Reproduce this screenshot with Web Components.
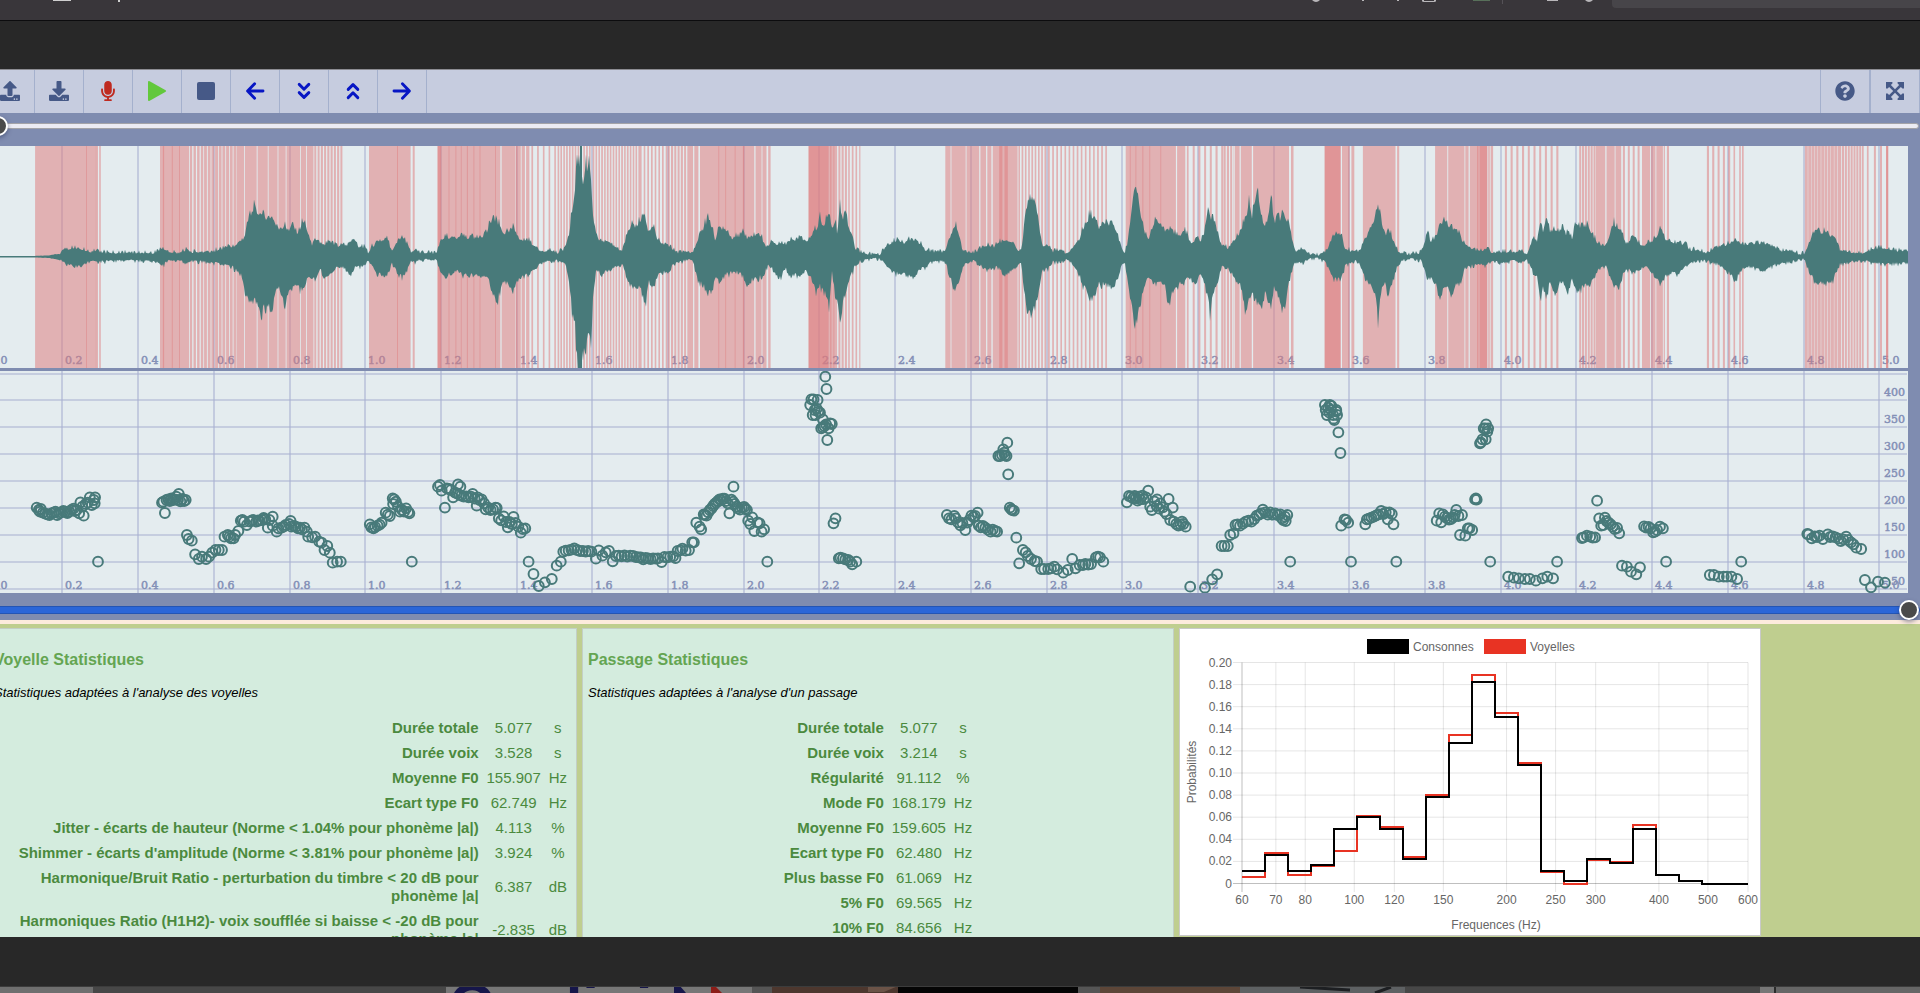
<!DOCTYPE html>
<html lang="fr">
<head>
<meta charset="utf-8">
<title>Analyse de la voix</title>
<style>
    html, body { height: 100%; }
    body { margin: 0; background: #282828; font-family: "Liberation Sans", Arial, sans-serif; overflow: hidden; }
</style>
</head>
<body>
<voix-page></voix-page>

<script>
// Trazos de los iconos de la barra
const ICONOS = {
    subir: ['0 0 512 512', '<path d="M296 384h-80c-13.3 0-24-10.7-24-24V192h-87.7c-17.8 0-26.7-21.5-14.1-34.1L242.3 5.7c7.5-7.5 19.8-7.5 27.3 0l152.2 152.2c12.6 12.6 3.7 34.1-14.1 34.1H320v168c0 13.3-10.7 24-24 24zm216-8v112c0 13.3-10.7 24-24 24H24c-13.3 0-24-10.7-24-24V376c0-13.3 10.7-24 24-24h136v8c0 30.9 25.1 56 56 56h80c30.9 0 56-25.1 56-56v-8h136c13.3 0 24 10.7 24 24zm-124 88c0-11-9-20-20-20s-20 9-20 20 9 20 20 20 20-9 20-20zm64 0c0-11-9-20-20-20s-20 9-20 20 9 20 20 20 20-9 20-20z"/>'],
    bajar: ['0 0 512 512', '<path d="M216 0h80c13.3 0 24 10.7 24 24v168h87.7c17.8 0 26.7 21.5 14.1 34.1L269.7 378.3c-7.5 7.5-19.8 7.5-27.3 0L90.1 226.1c-12.6-12.6-3.7-34.1 14.1-34.1H192V24c0-13.3 10.7-24 24-24zm296 376v112c0 13.3-10.7 24-24 24H24c-13.3 0-24-10.7-24-24V376c0-13.3 10.7-24 24-24h146.7l49 49c20.1 20.1 52.5 20.1 72.6 0l49-49H488c13.3 0 24 10.7 24 24zm-124 88c0-11-9-20-20-20s-20 9-20 20 9 20 20 20 20-9 20-20zm64 0c0-11-9-20-20-20s-20 9-20 20 9 20 20 20 20-9 20-20z"/>'],
    micro: ['-80 0 512 512', '<path d="M176 352c53.02 0 96-42.98 96-96V96c0-53.02-42.98-96-96-96S80 42.98 80 96v160c0 53.02 42.98 96 96 96zm160-160h-16c-8.84 0-16 7.16-16 16v48c0 74.8-64.49 134.82-140.79 127.38C96.71 376.89 48 317.11 48 250.3V208c0-8.84-7.16-16-16-16H16c-8.84 0-16 7.16-16 16v40.16c0 89.64 63.97 169.55 152 181.69V464H96c-8.84 0-16 7.16-16 16v16c0 8.84 7.16 16 16 16h160c8.84 0 16-7.16 16-16v-16c0-8.84-7.16-16-16-16h-56v-33.77C285.71 418.47 352 344.9 352 256v-48c0-8.84-7.16-16-16-16z"/>'],
    play: ['0 0 20 20', '<path d="M1 1.2Q1 -.6 2.7 .3L18.2 8.9Q20 10 18.2 11.1L2.7 19.7Q1 20.6 1 18.8Z"/>'],
    stop: ['0 0 20 20', '<rect x="1" y="1" width="18" height="18" rx="2"/>'],
    izq: ['0 0 20 20', '<path class="l" d="M9.6 2.8 2.6 10l7 7.2M3 10h15"/>'],
    abajo: ['0 0 20 20', '<path class="l" d="M5.2 3.4l4.8 4.8 4.8-4.8M5.2 11.6l4.8 4.8 4.8-4.8"/>'],
    arriba: ['0 0 20 20', '<path class="l" d="M5.2 8.4L10 3.6l4.8 4.8M5.2 16.6l4.8-4.8 4.8 4.8"/>'],
    der: ['0 0 20 20', '<path class="l" d="M10.4 2.8l7 7.2-7 7.2M17 10H2"/>'],
    ayuda: ['0 0 512 512', '<path d="M504 256c0 136.997-111.043 248-248 248S8 392.997 8 256C8 119.083 119.043 8 256 8s248 111.083 248 248zM262.655 90c-54.497 0-89.255 22.957-116.549 63.758-3.536 5.286-2.353 12.415 2.715 16.258l34.699 26.31c5.205 3.947 12.621 3.008 16.665-2.122 17.864-22.658 30.113-35.797 57.303-35.797 20.429 0 45.698 13.148 45.698 32.958 0 14.976-12.363 22.667-32.534 33.976C247.128 238.528 216 254.941 216 296v4c0 6.627 5.373 12 12 12h56c6.627 0 12-5.373 12-12v-1.333c0-28.462 83.186-29.647 83.186-106.667 0-58.002-60.165-102-116.531-102zM256 338c-25.365 0-46 20.635-46 46 0 25.364 20.635 46 46 46s46-20.636 46-46c0-25.365-20.635-46-46-46z"/>'],
    ampliar: ['0 0 20 20', '<path d="M1 1h6.4v1.6L5.9 4.1 10 8.2l4.1-4.1-1.5-1.5V1H19v6.4h-1.6l-1.5-1.5L11.8 10l4.1 4.1 1.5-1.5H19V19h-6.4v-1.6l1.5-1.5L10 11.8l-4.1 4.1 1.5 1.5V19H1v-6.4h1.6l1.5 1.5L8.2 10 4.1 5.9 2.6 7.4H1z"/>'],
};

// Envolvente de la onda: [x, amplitud arriba, amplitud abajo], en tres tramos de 640 px.
// Unidades de muestra: UX por px horizontal y UY por px vertical.
const UX = 2.45;
const UY = 3;

const ONDA = [
    [0, '0,2,2 80,2,2 120,4,4 150,10,10 160,22,20 180,28,28 205,22,25 215,14,14 235,18,15 260,12,12 300,12,12 340,12,12 380,12,12 398,28,25 410,12,12 440,12,12 455,22,20 470,14,14 500,15,14 520,15,18 540,22,22 570,30,30 590,45,50 600,65,110 610,120,135 622,142,125 630,125,130 637,130,165 650,120,150 668,120,145 680,85,90 690,85,110 698,90,140 710,80,100 718,100,90 728,65,85 740,105,100 750,95,80 755,60,60 765,35,65 776,55,60 785,35,35 792,35,60 810,45,50 830,30,30 845,35,30 855,38,55 865,55,35 880,30,30 895,30,25 902,10,10 912,30,30 925,45,50 946,55,60 960,20,20 970,40,40 985,60,62 998,40,35 1008,12,10 1018,25,18 1030,12,8 1070,12,10 1080,45,50 1095,60,58 1115,50,40 1130,65,50 1150,55,55 1180,58,55 1195,80,60 1205,115,110 1218,105,130 1230,75,75 1245,70,75 1257,85,110 1265,75,70 1275,45,65 1290,55,55 1310,30,35 1330,15,15 1350,18,15 1365,10,10 1385,25,20 1395,75,80 1402,145,160 1408,180,180 1412,290,280 1420,285,310 1428,225,290 1435,275,260 1443,255,235 1449,225,255 1453,110,110 1460,60,40 1475,45,50 1492,40,40 1515,25,25 1525,20,25 1535,60,60 1545,85,85 1560,95,90'],
    [640, '0,110,95 8,130,115 14,115,140 20,65,70 33,95,95 42,50,55 55,38,45 68,35,50 80,20,25 95,12,15 110,18,10 130,10,10 137,30,45 145,65,75 155,85,85 165,112,110 178,85,100 184,50,60 195,85,75 208,80,55 225,55,45 240,60,45 253,75,60 262,55,90 275,65,65 290,70,62 305,40,50 313,25,25 322,45,30 335,38,60 345,40,65 355,38,30 370,48,65 380,45,50 392,65,60 405,40,40 418,55,55 425,80,75 433,80,105 440,115,85 450,90,100 460,128,120 463,125,155 470,85,45 480,105,130 484,60,140 489,165,190 491,155,220 496,110,150 503,140,100 510,90,80 520,60,45 526,25,30 538,15,12 560,8,8 580,3,4 590,10,8 605,35,25 618,42,45 632,55,50 645,40,52 667,55,60 685,42,40 700,20,30 715,15,15 745,15,12 752,35,30 762,65,65 773,95,100 783,60,65 790,20,30 805,15,15 820,12,12 835,25,25 852,38,40 865,28,28 880,45,35 897,50,52 915,38,38 925,22,25 933,18,15 937,40,50 942,120,110 950,165,175 960,170,165 970,155,140 978,90,100 985,35,40 1000,35,35 1010,15,15 1035,20,15 1045,8,8 1060,28,22 1075,45,50 1088,90,90 1103,125,120 1115,110,115 1125,85,80 1145,100,85 1158,95,90 1170,65,70 1180,25,25 1188,12,20 1194,35,55 1203,125,140 1211,220,190 1217,190,200 1225,140,140 1235,75,90 1245,50,60 1255,90,75 1273,110,80 1285,75,80 1293,85,150 1305,75,105 1320,65,80 1333,78,70 1345,55,60 1350,35,65 1358,50,85 1365,65,70 1373,40,45 1383,75,80 1392,155,125 1397,120,165 1405,110,100 1415,75,85 1425,35,30 1440,25,35 1455,50,60 1470,75,80 1483,115,155 1492,160,130 1500,120,110 1512,210,140 1522,130,155 1530,90,110 1538,110,120 1546,185,160 1553,95,90 1562,135,110'],
    [1280, '0,110,130 6,140,165 14,120,130 22,95,80 30,45,35 38,12,12 55,25,20 70,10,8 95,5,5 108,10,10 118,30,35 128,60,60 140,70,68 150,60,62 160,25,25 175,15,18 190,12,10 200,28,35 210,60,65 225,90,95 235,130,125 240,160,195 248,105,105 257,60,75 265,85,120 277,50,70 287,20,30 300,10,10 320,6,6 345,12,8 352,35,35 361,80,65 370,45,65 380,60,80 392,90,115 400,110,95 413,95,95 420,88,125 432,80,75 443,60,80 452,35,35 475,22,25 490,18,22 505,25,25 520,12,15 545,15,18 570,15,12 590,18,20 605,10,10 615,35,30 620,60,50 630,45,60 638,110,125 645,75,75 652,120,135 660,80,80 676,80,120 685,75,75 694,100,75 700,65,90 705,70,115 715,55,70 722,95,90 731,95,110 740,90,90 755,95,85 768,60,70 780,35,35 800,35,30 808,60,60 818,100,90 830,80,95 840,70,50 848,35,35 862,60,45 880,45,40 888,25,25 900,45,35 915,50,50 933,85,85 945,55,60 960,40,45 975,40,50 995,40,30 1003,20,20 1020,22,12 1040,10,10 1070,28,20 1095,38,45 1105,38,50 1117,55,75 1127,38,40 1150,38,30 1165,40,35 1185,42,45 1210,30,25 1230,18,20 1255,18,15 1275,6,8 1285,10,8 1295,40,40 1312,80,80 1335,72,80 1350,62,75 1362,55,50 1372,20,22 1400,14,15 1430,12,12 1450,22,18 1480,25,22 1510,20,20 1538,18,18'],
];

// Bandas sonoras: "inicio-fin" sólida, "inicio-fin/periodo/ancho" rayada
const BANDAS = [
    [0, '86-236 237-240 243-247 392-463 465-500/9/6 500-580/9/7 580-598 600-629 631-656 658-680 682-700 702-735 737-750 752-768 770-842/8/5 904-1006 1011-1016 1072-1226 1229-1263 1265-1276 1278-1300/11/8 1302-1370/14/4 1366-1450/7/4 1452-1568/7/4',
        '211-213 235-237 399-402 421-423 439-441 973-975 1072-1081 1099-1101 1116-1118 1129-1131 1144-1146 1160-1162 1175-1177 1213-1215 1264-1267'],
    [640, '0-68/9/4 68-120/8/5 120-145/13/10 147-280 283-298 300-310 314-320 413-483 486-510/8/5 510-540/9/4 748-761 763-798 800-831 834-848 851-861 864-925 927-1000/8/4 1000-1145/10/4 1190-1313 1316-1336 1340-1344 1354-1430/14/5 1430-1455/8/5 1457-1469 1472-1499 1502-1568',
        '192-194 209-211 232-234 252-255 413-462 466-469 474-476 880-888 893-901 1200-1202 1214-1216 1231-1233 1248-1250 1275-1277'],
    [1280, '0-22 27-33 109-149 152-170 175-182 203-283 287-292 380-410 412-452 454-462 465-508 510-514 516-522 551-690/14/5 733-772/7/5 773-797 800-820 822-836 840-882/12/5 887-907 909-920 922-938 940-943 948-953 1046-1110/13/5 1111-1115 1125-1138/7/4 1286-1370/8/7 1370-1430/7/5 1438-1442 1455-1460 1470-1475 1485-1490',
        '110-148 168-170 483-486 489-508 1485-1490'],
];

// Puntos de F0 en los mismos tramos
const TONOS = [
    [0, '90,443 95,450 100,447 98,455 105,458 111,461 116,463 121,465 126,460 131,458 136,455 140,465 145,460 150,457 155,453 160,455 165,459 170,455 175,450 180,446 184,453 188,450 194,460 205,467 197,427 202,440 210,432 215,428 220,412 225,435 233,412 230,420 232,430 240,605 397,428 400,425 404,459 408,420 412,418 416,423 420,415 424,420 428,418 432,410 438,402 436,420 442,424 447,417 451,423 455,420 458,525 462,537 470,542 478,583 487,597 495,590 505,597 512,590 520,578 528,570 536,570 544,570 550,530 558,525 562,530 566,535 572,535 576,525 584,513 590,482 594,480 598,485 605,495 612,485 616,482 620,480 628,485 632,481 635,482 642,480 646,474 650,478 656,503 660,480 668,470 668,497 678,515 682,505 690,503 695,500 700,495 712,483 708,492 714,500 720,498 725,500 730,505 735,503 740,508 746,503 752,515 755,530 765,532 772,530 782,545 788,548 795,570 802,558 808,578 815,608 826,605 835,605 906,493 910,502 915,505 919,501 925,497 930,494 935,488 945,458 950,464 955,468 962,415 966,418 963,432 970,425 975,440 980,455 985,450 990,455 995,445 1000,456 1003,460 1009,605 1073,380 1078,375 1082,392 1090,443 1095,385 1100,387 1105,390 1110,412 1115,398 1122,373 1128,380 1120,400 1125,404 1130,407 1136,410 1142,409 1148,412 1154,410 1158,402 1163,416 1168,437 1170,412 1175,420 1180,418 1186,430 1190,448 1196,443 1202,450 1208,448 1214,443 1217,444 1222,475 1228,481 1234,469 1240,486 1244,502 1248,486 1254,492 1258,471 1263,489 1270,500 1276,518 1281,507 1287,505 1295,605 1307,642 1320,678 1335,667 1352,657 1364,617 1374,605 1380,575 1386,572 1393,571 1400,569 1407,565 1414,570 1421,573 1428,573 1435,575 1441,573 1449,575 1460,596 1467,571 1476,587 1484,577 1492,573 1501,604 1509,588 1516,587 1523,589 1530,586 1537,590 1544,587 1551,588 1558,591 1565,592'],
    [640, '2,592 8,598 14,594 20,595 26,597 32,595 38,596 44,595 53,606 60,591 67,592 74,590 81,589 87,594 92,573 99,571 104,566 112,572 120,570 128,547 132,547 138,488 146,500 150,508 156,463 159,465 163,467 167,457 171,450 175,446 179,438 183,432 187,428 191,423 195,418 199,421 203,416 207,416 211,423 215,430 219,460 229,380 224,419 228,425 232,432 236,440 240,445 245,449 250,443 255,441 258,446 262,450 265,482 270,492 275,472 280,513 288,487 293,490 298,515 304,508 312,605 417,135 420,118 425,118 435,120 423,165 428,150 433,146 437,155 441,158 430,165 448,178 444,205 448,202 452,198 456,193 462,205 466,190 470,192 454,50 457,87 459,240 474,490 479,475 487,595 491,593 497,595 503,598 510,600 515,605 520,613 530,605 752,465 757,475 763,478 770,468 774,475 779,487 785,496 790,489 797,510 802,488 807,480 812,467 817,471 821,468 827,458 830,497 835,502 840,498 846,503 852,509 859,515 864,509 870,513 875,515 878,288 882,288 887,285 890,268 894,286 898,288 892,278 900,248 902,343 906,443 910,448 912,450 916,452 922,533 929,610 938,570 945,577 950,588 958,597 967,603 973,605 983,627 990,627 1000,627 1007,625 1015,620 1022,628 1037,638 1048,630 1059,597 1067,625 1077,615 1085,615 1091,612 1098,614 1105,612 1117,592 1122,590 1127,592 1135,605 1193,427 1198,408 1203,410 1208,415 1212,408 1215,415 1219,422 1222,410 1226,418 1231,407 1234,417 1240,412 1245,392 1250,440 1254,450 1260,424 1267,418 1266,438 1272,446 1275,430 1281,442 1285,455 1290,462 1295,417 1299,480 1305,443 1308,485 1314,492 1319,497 1324,493 1328,485 1331,492 1337,500 1348,680 1384,683 1402,658 1414,643 1425,558 1432,558 1440,558 1446,525 1454,520 1459,495 1464,493 1470,497 1477,491 1484,485 1491,482 1498,485 1505,477 1511,467 1517,464 1522,460 1526,449 1532,457 1538,464 1544,457 1550,464 1556,460 1562,465'],
    [1280, '1,463 5,475 8,480 14,483 12,470 18,465 25,605 110,135 112,150 115,165 122,135 118,143 125,150 121,158 130,165 133,180 131,176 138,150 138,155 140,165 126,138 143,217 148,279 150,497 158,478 162,480 167,488 174,605 209,493 213,478 218,476 224,473 230,470 236,466 241,463 248,453 253,462 259,457 264,478 268,457 274,462 278,493 285,605 384,482 390,460 395,487 399,463 404,470 409,474 414,479 419,477 424,472 428,465 432,450 437,468 446,465 441,525 454,527 460,505 464,505 471,510 478,418 480,415 482,419 490,250 492,247 496,238 499,205 504,238 505,193 508,215 510,205 503,205 515,605 559,650 573,653 585,655 600,657 612,657 627,662 643,655 655,650 669,655 679,605 740,534 744,532 752,527 760,530 766,533 772,532 777,422 782,475 787,497 796,473 792,495 800,483 805,488 810,493 815,500 820,507 826,504 831,520 838,617 850,620 860,635 873,643 882,622 892,499 897,503 903,501 908,505 914,517 919,515 924,510 931,500 938,505 946,605 1053,645 1063,645 1075,650 1087,650 1095,650 1106,650 1120,657 1130,605 1292,522 1295,523 1303,535 1310,529 1316,531 1322,527 1330,537 1342,523 1348,531 1354,529 1361,532 1368,536 1374,543 1380,538 1387,530 1392,540 1399,547 1405,553 1412,563 1424,567 1433,660 1448,682 1465,665 1482,668'],
];

const HISTO = {
    consonnes: [.011, .026, .011, .0165, .049, .06, .049, .022, .078, .127, .182, .151, .107, .011, .002, .022, .0185, .049, .0075, .002, 0, 0],
    voyelles: [.006, .0275, .008, .0158, .0295, .061, .051, .0237, .0805, .1345, .189, .154, .109, .0102, 0, .0217, .0197, .053, .008, .0023, 0, 0],
};

const STATS_VOYELLE = [
    ['Durée totale', '5.077', 's'],
    ['Durée voix', '3.528', 's'],
    ['Moyenne F0', '155.907', 'Hz'],
    ['Ecart type F0', '62.749', 'Hz'],
    ['Jitter - écarts de hauteur (Norme &lt; 1.04% pour phonème |a|)', '4.113', '%'],
    ['Shimmer - écarts d\'amplitude (Norme &lt; 3.81% pour phonème |a|)', '3.924', '%'],
    ['Harmonique/Bruit Ratio - perturbation du timbre &lt; 20 dB pour phonème |a|', '6.387', 'dB'],
    ['Harmoniques Ratio (H1H2)- voix soufflée si baisse &lt; -20 dB pour phonème |a|', '-2.835', 'dB'],
];

const STATS_PASSAGE = [
    ['Durée totale', '5.077', 's'],
    ['Durée voix', '3.214', 's'],
    ['Régularité', '91.112', '%'],
    ['Mode F0', '168.179', 'Hz'],
    ['Moyenne F0', '159.605', 'Hz'],
    ['Ecart type F0', '62.480', 'Hz'],
    ['Plus basse F0', '61.069', 'Hz'],
    ['5% F0', '69.565', 'Hz'],
    ['10% F0', '84.656', 'Hz'],
];

class VoixBouton extends HTMLElement {
    constructor() {
        super();
        this.attachShadow({ mode: 'open' });
    }

    connectedCallback() {
        const [caja, trazo] = ICONOS[this.getAttribute('icono')];
        this.shadowRoot.innerHTML = `
            <style>
                :host { display:block; border-right:1px solid #a4b0cd; color:#465987; }
                :host([tono="rojo"]) { color:#bf2a20; }
                :host([tono="verde"]) { color:#62c83c; }
                :host([tono="azul"]) { color:#0716c4; }
                :host([inicio]) { border-left:1px solid #a4b0cd; }
                button { box-sizing:border-box; display:flex; align-items:center; justify-content:center; width:48px; height:43px; padding:0 0 1px; border:none; background:none; color:inherit; cursor:pointer; }
                button:hover { background:#d5daea; }
                svg { width:20px; height:20px; fill:currentColor; }
                .l { fill:none; stroke:currentColor; stroke-width:2.9; stroke-linecap:round; stroke-linejoin:round; }
            </style>
            <button type="button" aria-label="${this.getAttribute('nombre')}"><svg viewBox="${caja}" aria-hidden="true">${trazo}</svg></button>
        `;
    }
}

class VoixBarre extends HTMLElement {
    constructor() {
        super();
        this.attachShadow({ mode: 'open' });
        this.shadowRoot.innerHTML = `
            <style>
                :host { display:flex; border-top:1px solid #8c8c92; background:#c6ccdf; }
                .hueco { flex:1; }
            </style>
            <slot></slot>
            <div class="hueco"></div>
            <slot name="fin"></slot>
        `;
    }
}

class VoixCurseur extends HTMLElement {
    constructor() {
        super();
        this.attachShadow({ mode: 'open' });
        this.shadowRoot.innerHTML = `
            <style>
                :host { display:block; }
                input { -webkit-appearance:none; appearance:none; display:block; width:100%; height:20px; margin:0; background:none; }
                input::-webkit-slider-runnable-track { box-sizing:border-box; height:6px; border:1px solid #a3a3a8; border-radius:3px; background:#ebebf3; }
                :host([lleno]) input::-webkit-slider-runnable-track { height:8px; border-color:#2455b4; border-radius:4px; background:#2b66d8; }
                input::-webkit-slider-thumb { -webkit-appearance:none; box-sizing:border-box; width:20px; height:20px; margin-top:-8px; border:2px solid #ffffff; border-radius:50%; background:#4a4a4a; box-shadow:0 2px 4px rgba(40, 50, 90, .5); }
                :host([lleno]) input::-webkit-slider-thumb { margin-top:-7px; }
            </style>
            <input type="range" min="0" max="100">
        `;
    }

    connectedCallback() {
        const input = this.shadowRoot.querySelector('input');
        input.value = this.getAttribute('valor');
        input.setAttribute('aria-label', this.getAttribute('nombre'));
    }
}

class VoixTrace extends HTMLElement {
    constructor() {
        super();
        this.attachShadow({ mode: 'open' });
    }

    connectedCallback() {
        const capas = this.getAttribute('tipo') === 'onda'
            ? this.rejillaTiempo() + this.bandas() + this.onda()
            : this.rejillaTonos() + this.rejillaTiempo() + this.tonos();

        this.shadowRoot.innerHTML = `
            <style>
                :host { display:block; background:#e4ecef; }
                svg { display:block; width:100%; height:222px; }
                .reja { stroke:#a9b1d1; stroke-opacity:.7; stroke-width:1.6; }
                text { font-family:Georgia, "DejaVu Serif", serif; font-size:11px; fill:#8490b7; stroke:#8490b7; stroke-width:.5; }
                .banda { fill:#df7b7d; fill-opacity:.52; }
                .onda { fill:#487a7a; }
                .tonos { fill:none; stroke:#487a7a; stroke-width:2; }
            </style>
            <svg viewBox="-14 0 1922 222" preserveAspectRatio="none">${capas}</svg>
        `;
    }

    rejillaTiempo() {
        let salida = '';
        for (let i = 0; i <= 25; i++) {
            const x = Math.round(i * 75.7 - 13.3);
            salida += `<line class="reja" x1="${x}" y1="0" x2="${x}" y2="222"/>`;
            salida += `<text x="${x + 3}" y="218">${(i * 0.2).toFixed(1)}</text>`;
        }
        return salida;
    }

    rejillaTonos() {
        let salida = '';
        for (let hz = 50; hz <= 450; hz += 50) {
            const y = Math.round(217.5 - (hz - 50) * 0.5375);
            salida += `<line class="reja" x1="-14" y1="${y}" x2="1907" y2="${y}"/>`;
            if (hz < 450) {
                salida += `<text x="1905" y="${y - 4}" text-anchor="end">${hz}</text>`;
            }
        }
        return salida;
    }

    bandas() {
        const rect = (x0, ini, fin) => {
            const a = (x0 + ini / UX).toFixed(1);
            const b = (x0 + fin / UX).toFixed(1);
            return `M${a} 0H${b}V222H${a}Z`;
        };
        let d = '';
        let oscuras = '';
        BANDAS.forEach(([x0, claras, fuertes]) => {
            claras.split(' ').forEach(b => {
                const [rango, periodo, ancho] = b.split('/');
                const [ini, fin] = rango.split('-').map(Number);
                if (!periodo) {
                    d += rect(x0, ini, fin);
                    return;
                }
                for (let x = ini; x < fin; x += Number(periodo)) {
                    d += rect(x0, x, Math.min(fin, x + Number(ancho)));
                }
            });
            fuertes.split(' ').forEach(b => {
                const [ini, fin] = b.split('-').map(Number);
                oscuras += rect(x0, ini, fin);
            });
        });
        return `<path class="banda" d="${d}"/><path class="banda" d="${oscuras}"/>`;
    }

    onda() {
        const puntos = ONDA.flatMap(([x0, datos]) => datos.split(' ').map(p => {
            const [x, a, b] = p.split(',').map(Number);
            return [x0 + x / UX, a / UY, b / UY];
        }));
        puntos.unshift([-14, .7, .7]);

        // Ruido fijo para que el borde quede dentado
        const ruido = (n) => {
            const s = Math.sin(n * 12.9898) * 43758.5453;
            return s - Math.floor(s);
        };
        const centro = 110.7;
        let arriba = '';
        let abajo = '';
        let k = 0;
        for (let x = -14; x <= 1908; x++) {
            while (k < puntos.length - 2 && puntos[k + 1][0] <= x) k++;
            const [xa, a0, b0] = puntos[k];
            const [xb, a1, b1] = puntos[k + 1];
            const t = Math.min(1, (x - xa) / (xb - xa));
            const base = x < 60 ? 0 : 4;
            const pico = (semilla) => Math.pow(ruido(x + semilla), 2) - .25;
            const a = (a0 + (a1 - a0) * t) * (1 + .22 * pico(0)) + base * pico(5000);
            const b = (b0 + (b1 - b0) * t) * (1 + .22 * pico(9000)) + base * pico(7000);
            arriba += `L${x} ${(centro - Math.max(a, .7)).toFixed(1)}`;
            abajo = `L${x} ${(centro + Math.max(b, .7)).toFixed(1)}` + abajo;
        }
        return `<path class="onda" d="M-14 ${centro}${arriba}${abajo}Z"/><path class="onda" d="M580 0h2v222h-2z"/>`;
    }

    tonos() {
        const circulos = TONOS.map(([x0, datos]) => datos.split(' ').map(p => {
            const [x, y] = p.split(',').map(Number);
            return `<circle cx="${(x0 + x / UX).toFixed(1)}" cy="${(y / UY - 11).toFixed(1)}" r="4.9"/>`;
        }).join('')).join('');
        return `<g class="tonos">${circulos}</g>`;
    }
}

class VoixStats extends HTMLElement {
    constructor() {
        super();
        this.attachShadow({ mode: 'open' });
    }

    connectedCallback() {
        const filas = this.getAttribute('tipo') === 'voyelle' ? STATS_VOYELLE : STATS_PASSAGE;
        this.shadowRoot.innerHTML = `
            <style>
                :host { display:block; box-sizing:border-box; border:1px solid #c3cfc6; background:#d4ecde; padding:21px 5px 0; }
                h2 { margin:0; font-size:16px; line-height:20px; color:#64a552; }
                p { margin:13px 0 12px; font-size:13px; line-height:20px; font-style:italic; color:#000000; }
                table { margin:0 auto; border-collapse:separate; border-spacing:1px; font-size:15px; color:#4b8a3e; }
                th, td { padding:3px; line-height:18px; }
                th { text-align:right; }
                td { text-align:center; }
                td.valor { min-width:56px; }
                td.unidad { min-width:18px; }
            </style>
            <h2><slot></slot></h2>
            <p><slot name="nota"></slot></p>
            <table>
                <tbody>
                    ${filas.map(([nombre, valor, unidad]) => `
                        <tr><th scope="row">${nombre}</th><td class="valor">${valor}</td><td class="unidad">${unidad}</td></tr>
                    `).join('')}
                </tbody>
            </table>
        `;
    }
}

class VoixHisto extends HTMLElement {
    constructor() {
        super();
        this.attachShadow({ mode: 'open' });
    }

    connectedCallback() {
        this.shadowRoot.innerHTML = `
            <style>
                :host { display:block; box-sizing:border-box; align-self:start; border:1px solid #c9c9c9; background:#ffffff; }
                svg { display:block; width:100%; }
                text { font-size:12px; fill:#666666; }
                .reja { stroke:#000000; stroke-opacity:.1; }
                .eje { stroke:#000000; stroke-opacity:.25; }
                .curva { fill:none; stroke-width:2; }
            </style>
            <svg viewBox="0 0 580 306" role="img" aria-label="Histogramme des fréquences">
                <rect x="187" y="10" width="42" height="15" fill="#000000"/>
                <text x="233" y="22">Consonnes</text>
                <rect x="304" y="10" width="42" height="15" fill="#e83323"/>
                <text x="350" y="22">Voyelles</text>
                ${this.ejes()}
                <path class="curva" stroke="#e83323" d="${this.escalera(HISTO.voyelles)}"/>
                <path class="curva" stroke="#000000" d="${this.escalera(HISTO.consonnes)}"/>
                <text x="316" y="300" text-anchor="middle">Frequences (Hz)</text>
                <text transform="translate(16 143) rotate(-90)" text-anchor="middle">Probabilités</text>
            </svg>
        `;
    }

    ejes() {
        let salida = '';
        for (let i = 0; i <= 10; i++) {
            const y = 254.5 - i * 22.1;
            salida += `<line class="${i ? 'reja' : 'eje'}" x1="53" x2="568" y1="${y}" y2="${y}"/>`;
            salida += `<text x="52" y="${y + 4}" text-anchor="end">${i ? (i * 0.02).toFixed(2) : '0'}</text>`;
        }
        [60, 70, 80, 100, 120, 150, 200, 250, 300, 400, 500, 600].forEach(f => {
            const x = 62 + 506 * Math.log10(f / 60);
            salida += `<line class="${f > 60 ? 'reja' : 'eje'}" x1="${x}" x2="${x}" y1="33.5" y2="263"/>`;
            salida += `<text x="${x}" y="275" text-anchor="middle">${f}</text>`;
        });
        return salida;
    }

    escalera(valores) {
        return valores.map((v, i) => {
            const y = Math.round(254.5 - v * 1105);
            return `${i ? 'V' : 'M62 '}${y}H${62 + 23 * (i + 1)}`;
        }).join('');
    }
}

class VoixPage extends HTMLElement {
    constructor() {
        super();
        this.attachShadow({ mode: 'open' });
        this.shadowRoot.innerHTML = `
            <style>
                :host { display:flex; flex-direction:column; height:100vh; }
                header { display:flex; justify-content:space-between; height:20px; border-bottom:1px solid #0c0c0e; background:#39363a; overflow:hidden; }
                header svg { display:block; height:8px; }
                main { flex:1; min-height:0; display:flex; flex-direction:column; margin:48px 0 49px -14px; overflow:hidden; background:#7f8cb0; }
                .arriba { margin:3px 1px 10px; }
                .abajo { margin:7px 0 0; position:relative; z-index:1; }
                voix-trace { margin-right:12px; }
                voix-trace[tipo="f0"] { margin-top:3px; }
                .stats { flex:1; min-height:0; display:grid; grid-template-columns:589fr 592fr 582fr 154fr; gap:5px; padding:4px 0 0 2px; border-top:4px solid #fdebdd; background:#bfce8f; }
                footer { height:7px; overflow:hidden; background:#474747; }
                footer svg { display:block; width:100%; height:7px; }
                .rotulo { font-size:60px; font-weight:bold; fill:#16164a; }
            </style>
            <header>
                <svg width="140" viewBox="0 0 140 8" fill="#cfcfcf"><rect x="53" width="18" height="1"/><rect x="118" width="2" height="2"/></svg>
                <svg width="610" viewBox="0 0 610 8" fill="#b9b7ba">
                    <path d="M2 0q4 4 8 0z"/><rect x="52" width="2" height="1"/><rect x="87" width="2" height="1"/>
                    <path d="M112 0v1q0 1 2 1h10q2 0 2-1V0h-2v1h-10V0z"/><rect x="163" width="17" height="1" fill="#58705a"/>
                    <rect x="192" width="1" height="4" fill="#555257"/><rect x="237" width="11" height="1"/><path d="M275 0q4 4 8 0z"/>
                    <path d="M302 0v4q0 4 4 4h304V0z" fill="#474549"/>
                </svg>
            </header>
            <main>
                <voix-barre>
                    <voix-bouton icono="subir" nombre="Ouvrir"></voix-bouton>
                    <voix-bouton icono="bajar" nombre="Enregistrer"></voix-bouton>
                    <voix-bouton icono="micro" tono="rojo" nombre="Micro"></voix-bouton>
                    <voix-bouton icono="play" tono="verde" nombre="Lire"></voix-bouton>
                    <voix-bouton icono="stop" nombre="Arrêter"></voix-bouton>
                    <voix-bouton icono="izq" tono="azul" nombre="Gauche"></voix-bouton>
                    <voix-bouton icono="abajo" tono="azul" nombre="Réduire"></voix-bouton>
                    <voix-bouton icono="arriba" tono="azul" nombre="Agrandir"></voix-bouton>
                    <voix-bouton icono="der" tono="azul" nombre="Droite"></voix-bouton>
                    <voix-bouton slot="fin" inicio icono="ayuda" nombre="Aide"></voix-bouton>
                    <voix-bouton slot="fin" inicio icono="ampliar" nombre="Plein écran"></voix-bouton>
                </voix-barre>
                <voix-curseur class="arriba" valor="0" nombre="Début"></voix-curseur>
                <voix-trace tipo="onda"></voix-trace>
                <voix-trace tipo="f0"></voix-trace>
                <voix-curseur class="abajo" lleno valor="100" nombre="Fin"></voix-curseur>
                <section class="stats">
                    <voix-stats tipo="voyelle">Voyelle Statistiques<span slot="nota">Statistiques adaptées à l'analyse des voyelles</span></voix-stats>
                    <voix-stats tipo="passage">Passage Statistiques<span slot="nota">Statistiques adaptées à l'analyse d'un passage</span></voix-stats>
                    <voix-histo></voix-histo>
                </section>
            </main>
            <footer>
                <svg viewBox="0 0 1920 7" preserveAspectRatio="none">
                    <rect width="93" height="7" fill="#6f6f6f"/>
                    <rect x="446" width="306" height="7" fill="#777777"/>
                    <text class="rotulo" x="449" y="39">Qualini</text>
                    <path d="M674 0h6l6 7h-12z" fill="#16164a"/><path d="M711 0h4l7 7h-11z" fill="#8c1d18"/>
                    <rect x="752" width="20" height="7" fill="#555555"/>
                    <rect x="772" width="126" height="7" fill="#4d372e"/><path d="M868 0h30l-14 6h-16z" fill="#6b5347"/>
                    <rect x="898" width="180" height="7" fill="#050505"/>
                    <rect x="1078" width="22" height="7" fill="#555555"/>
                    <rect x="1100" width="140" height="7" fill="#5d4638"/>
                    <rect x="1240" width="165" height="7" fill="#5e6163"/><path d="M1300 1l50 3M1375 7l16-6" stroke="#1d1f22" stroke-width="3"/>
                    <rect x="1760" width="14" height="7" fill="#777777"/><rect x="1774" width="2" height="7" fill="#2b2b2b"/>
                    <rect x="1776" width="144" height="7" fill="#666666"/>
                    <rect width="1920" height="1" fill="#3c3c3c"/>
                </svg>
            </footer>
        `;
    }
}

customElements.define('voix-bouton', VoixBouton);
customElements.define('voix-barre', VoixBarre);
customElements.define('voix-curseur', VoixCurseur);
customElements.define('voix-trace', VoixTrace);
customElements.define('voix-stats', VoixStats);
customElements.define('voix-histo', VoixHisto);
customElements.define('voix-page', VoixPage);
</script>
</body>
</html>
